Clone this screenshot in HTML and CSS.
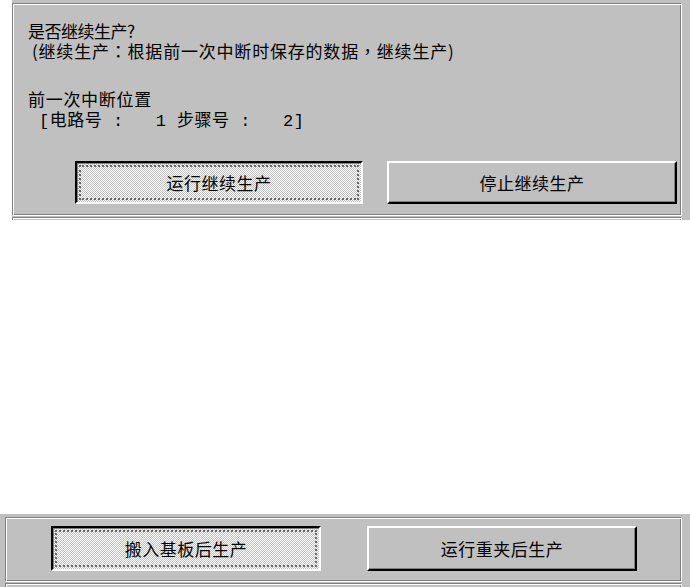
FILE: index.html
```html
<!DOCTYPE html>
<html lang="zh-CN">
<head>
  <meta charset="UTF-8" />
  <meta name="viewport" content="width=device-width, initial-scale=1.0"/>
  <title>继续生产</title>
  <link rel="stylesheet" href="styles.css">
</head>
<body>
  <div class="win top-win">
    <div class="frame main-frame">
      <p class="line ask">是否继续生产?</p>
      <p class="line note">(继续生产<span class="punct" lang="zh-TW">：</span>根据前一次中断时保存的数据<span class="punct" lang="zh-TW">，</span>继续生产)</p>
      <p class="line pos-title">前一次中断位置</p>
      <p class="line pos">[电路号 :   1 步骤号 :   2]</p>
      <div class="btn-row top-row">
        <button class="btn pushed wide-a">运行继续生产</button>
        <button class="btn wide-b">停止继续生产</button>
      </div>
    </div>
    <div class="frame next-frame"></div>
  </div>

  <div class="win bottom-win">
    <div class="frame low-frame">
      <div class="btn-row low-row">
        <button class="btn pushed low">搬入基板后生产</button>
        <button class="btn low">运行重夹后生产</button>
      </div>
    </div>
    <div class="frame next-frame"></div>
  </div>
</body>
</html>
```

FILE: styles.css
```css
body {
  margin: 0;
  background-color: #ffffff;
  font-family: "Noto Sans CJK SC", "Noto Sans", sans-serif;
  font-size: 17px;
  color: #000;
  width: 690px;
}
.win {
  background-color: #c0c0c0;
  overflow: hidden;
}
.top-win {
  margin-left: 12px;
  height: 220px;
  padding: 3px 8px 0 0;
  box-sizing: border-box;
}
.bottom-win {
  margin-top: 294px;
  height: 73px;
  padding: 3px 8px 0 5px;
  box-sizing: border-box;
}
.frame {
  border-top: 1px solid #808080;
  border-left: 1px solid #808080;
  border-bottom: 1px solid #ffffff;
  border-right: 1px solid #ffffff;
  box-shadow: inset 1px 1px #ffffff, inset -1px -1px #808080;
}
.main-frame {
  height: 213px;
  box-sizing: border-box;
  padding: 17px 0 0 15px;
}
.next-frame {
  margin-top: 1px;
  height: 20px;
}
.line {
  margin: 0;
  line-height: 20px;
  white-space: pre;
  letter-spacing: 0.5px;
}
.ask {
  letter-spacing: -0.5px;
}
.note {
  padding-left: 4px;
  letter-spacing: 0.8px;
}
.punct {
  font-family: "Noto Sans CJK TC", "Noto Sans CJK SC", sans-serif;
}
.pos-title {
  margin-top: 28px;
  letter-spacing: 0.7px;
}
.pos {
  margin-top: 3px;
  padding-left: 11px;
  font-family: "Liberation Mono", "Noto Sans CJK SC", monospace;
}
.btn-row {
  display: flex;
}
.top-row {
  margin-top: 29px;
  margin-left: 47px;
  gap: 24px;
}
.low-frame {
  height: 65px;
  box-sizing: border-box;
  padding: 8px 0 0 45px;
}
.low-row {
  gap: 46px;
}
.btn {
  position: relative;
  display: flex;
  align-items: center;
  justify-content: center;
  padding: 0;
  font-family: inherit;
  font-size: 17px;
  letter-spacing: 0.5px;
  color: #000;
  background-color: #c0c0c0;
  border-style: solid;
  border-width: 2px;
  border-color: #ffffff #000000 #000000 #ffffff;
  box-shadow: inset -1px -1px #808080;
  box-sizing: border-box;
}
.btn.pushed {
  border-color: #000000 #ffffff #ffffff #000000;
  box-shadow: inset 1px 1px #808080;
  background: repeating-conic-gradient(#ffffff 0 25%, #c0c0c0 0 50%) 0 0 / 2px 2px;
}
.btn.pushed::after {
  content: "";
  position: absolute;
  inset: 2px;
  border: 2px dotted #6a6a6a;
}
.wide-a {
  width: 288px;
  height: 43px;
}
.wide-b {
  width: 290px;
  height: 43px;
}
.low {
  width: 270px;
  height: 45px;
}
```
